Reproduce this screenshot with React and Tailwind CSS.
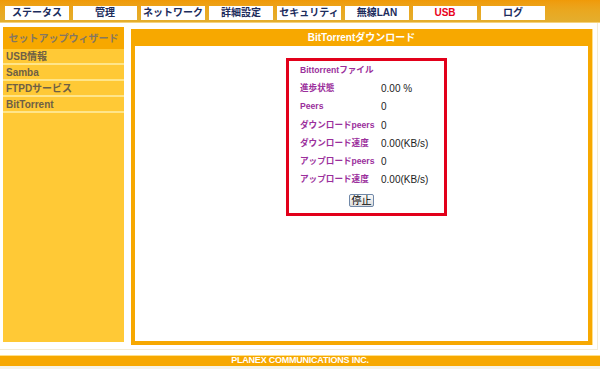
import React from "react";

const tabs = ["ステータス", "管理", "ネットワーク", "詳細設定", "セキュリティ", "無線LAN", "USB", "ログ"];
const rows = [
  ["Bittorrentファイル", ""],
  ["進歩状態", "0.00 %"],
  ["Peers", "0"],
  ["ダウンロードpeers", "0"],
  ["ダウンロード速度", "0.00(KB/s)"],
  ["アップロードpeers", "0"],
  ["アップロード速度", "0.00(KB/s)"],
];
const side = ["USB情報", "Samba", "FTPDサービス", "BitTorrent"];

export default function App() {
  return (
    <div
      className="w-[600px] h-[369px] bg-white overflow-hidden flex flex-col"
      style={{ fontFamily: '"Liberation Sans", "Noto Sans CJK JP", sans-serif' }}
    >
      {/* top nav */}
      <div className="h-[23px] bg-gradient-to-b from-[#f09a08] via-[#e9a820] to-[#e4ae2e] flex items-start pt-[6px] pl-[5px] gap-[4px] border-b border-[#f6d27a] shrink-0">
        {tabs.map((t) => (
          <div
            key={t}
            className={`w-[64px] h-[14px] bg-white flex items-center justify-center text-[10px] font-bold leading-none ${
              t === "USB" ? "text-[#e8001a]" : "text-[#1c2c5c]"
            }`}
          >
            {t}
          </div>
        ))}
      </div>

      {/* body */}
      <div className="flex pl-[3px] pt-[4px] h-[327px] border-b border-r border-[#f3ecd8] w-[598px] shrink-0">
        {/* sidebar */}
        <div className="w-[121px] h-[315px] bg-[#ffc936] flex flex-col">
          <div className="h-[22px] bg-[#f7a800] flex items-center justify-center text-[10px] font-bold text-[#857760]">
            セットアップウィザード
          </div>
          {side.map((s) => (
            <div
              key={s}
              className="h-[16px] border-b-2 border-[#ffe58a] flex items-center pl-[3px] text-[10px] font-bold text-[#6e6045]"
            >
              {s}
            </div>
          ))}
        </div>

        {/* main panel */}
        <div className="ml-[7px] mt-[2px] w-[462px] h-[316px] flex flex-col bg-[#f7a800] border-r border-[#ffe08a]">
          <div className="h-[17px] flex items-center justify-center text-white text-[10px] font-bold">
            BitTorrentダウンロード
          </div>
          <div className="flex-1 mx-[4px] mb-[4px] bg-white pt-[12px] pl-[151px]">
            <div className="w-[161px] h-[158px] border-[3px] border-[#e2001a] px-[11px] flex flex-col">
              {rows.map(([l, v]) => (
                <div key={l} className="h-[18.3px] flex items-center shrink-0">
                  <div className="w-[81px] text-[8.6px] font-bold text-[#9b2f9c] whitespace-nowrap">{l}</div>
                  <div className="text-[10px] text-[#222]">{v}</div>
                </div>
              ))}
              <button className="mt-[5px] ml-[49px] w-[25px] h-[13px] flex items-center justify-center text-[10px] leading-none text-black bg-gradient-to-b from-[#fafafa] to-[#dcdcdc] border border-[#7088a8] rounded-[2px]">
                停止
              </button>
            </div>
          </div>
        </div>
      </div>

      {/* footer */}
      <div className="mt-[5px] h-[11px] bg-[#f7a800] flex items-center justify-center text-white text-[9px] font-bold tracking-tight border-t border-[#ffe08a] shrink-0">
        PLANEX COMMUNICATIONS INC.
      </div>
      <div className="flex-1 bg-[#f6f3e6]" />
    </div>
  );
}
